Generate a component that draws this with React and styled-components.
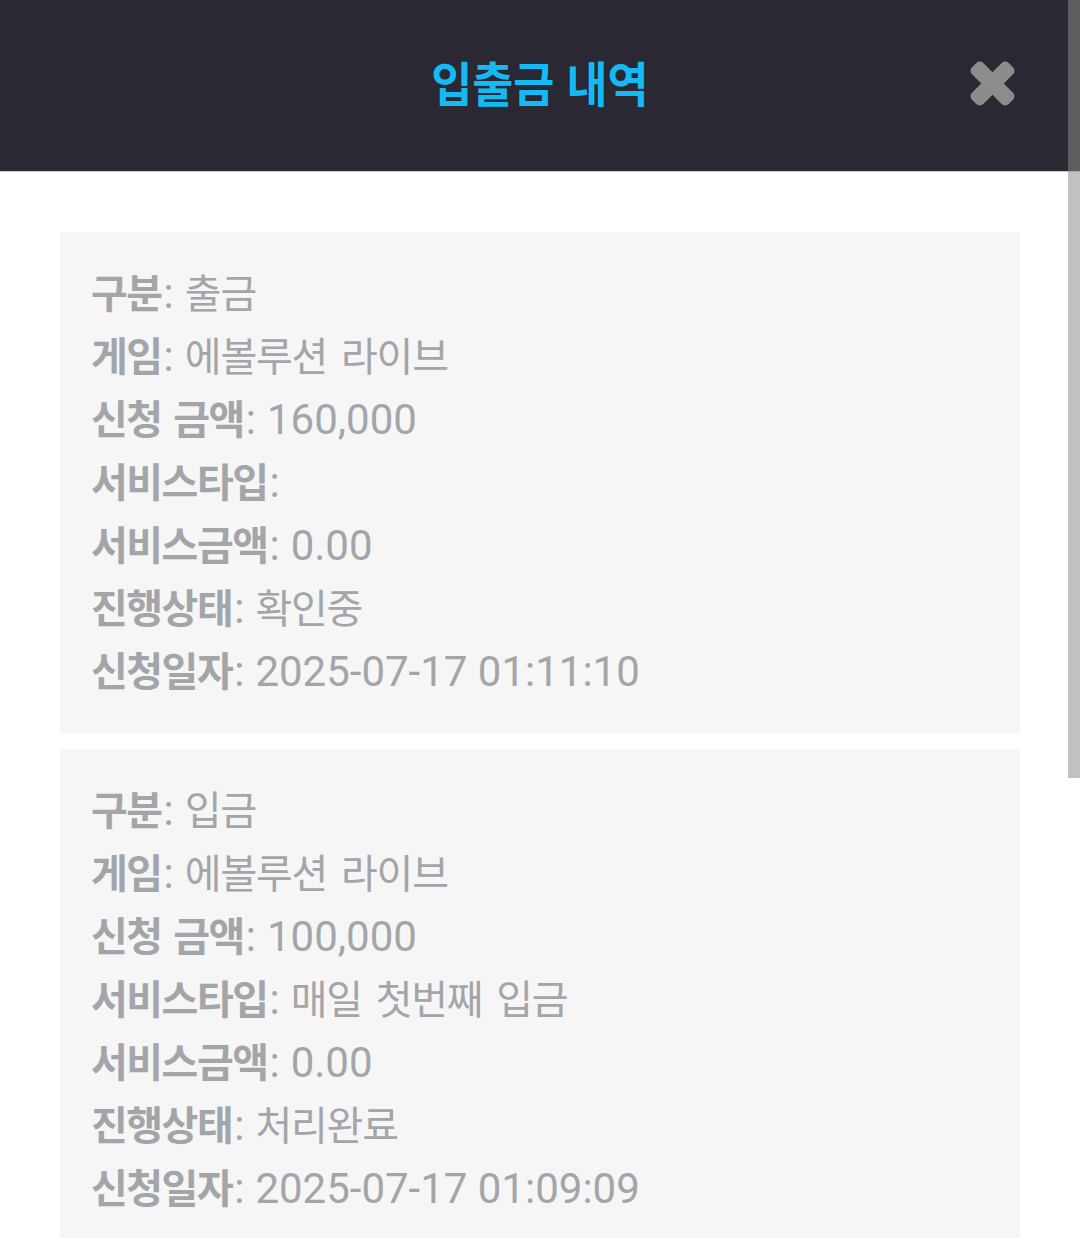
import React from "react";
import styled, { createGlobalStyle } from "styled-components";

const Global = createGlobalStyle`
  html, body { margin: 0; padding: 0; overflow: hidden; background: #ffffff; }
  body { font-family: Roboto, "Noto Sans CJK KR", sans-serif; }
`;

const Page = styled.div`
  width: 1080px;
  height: 1238px;
  overflow: hidden;
  position: relative;
  background: #ffffff;
`;

const Header = styled.header`
  height: 172px;
  background: #2a2933;
  display: flex;
  align-items: center;
  justify-content: center;
  position: relative;
  box-sizing: border-box;
  border-bottom: 1px solid #c9c9cc;
`;

const Title = styled.h1`
  margin: 0 0 10px 0;
  font-family: "Noto Sans CJK KR", sans-serif;
  font-weight: 700;
  font-size: 48px;
  line-height: 1;
  color: #14baf4;
  letter-spacing: 0;
  word-spacing: 2px;
  transform: scaleX(0.93);
`;

const CloseButton = styled.button`
  position: absolute;
  right: 63px;
  top: 59px;
  width: 49px;
  height: 49px;
  padding: 0;
  border: 0;
  background: transparent;
  display: flex;
  align-items: center;
  justify-content: center;
`;

const List = styled.main`
  padding: 60px 60px 0 60px;
  display: flex;
  flex-direction: column;
  gap: 16px;
`;

const Card = styled.section`
  background: #f6f6f6;
  padding: 28px 31px 32px 31px;
  display: flex;
  flex-direction: column;
`;

const Row = styled.div`
  height: 63px;
  line-height: 63px;
  white-space: nowrap;
  color: #a3a5a9;
`;

const Label = styled.span`
  font-family: "Noto Sans CJK KR", sans-serif;
  font-weight: 700;
  font-size: 40px;
  letter-spacing: -1.5px;
  word-spacing: 4px;
  margin-right: 2px;
`;

const Colon = styled.span`
  font-family: Roboto, sans-serif;
  font-size: 42px;
  margin-right: 11px;
`;

const Value = styled.span`
  font-family: ${(p) => (p.$hangul ? '"Noto Sans CJK KR", sans-serif' : "Roboto, sans-serif")};
  font-weight: 400;
  font-size: ${(p) => (p.$hangul ? "40px" : "42px")};
  letter-spacing: ${(p) => (p.$hangul ? "-1.2px" : "0")};
  word-spacing: ${(p) => (p.$hangul ? "6px" : "0")};
`;

const ScrollThumb = styled.div`
  position: fixed;
  right: 0;
  top: 0;
  width: 12px;
  height: 778px;
  background: rgba(137, 137, 137, 0.53);
`;

const records = [
  [
    ["구분", "출금"],
    ["게임", "에볼루션 라이브"],
    ["신청 금액", "160,000"],
    ["서비스타입", ""],
    ["서비스금액", "0.00"],
    ["진행상태", "확인중"],
    ["신청일자", "2025-07-17 01:11:10"],
  ],
  [
    ["구분", "입금"],
    ["게임", "에볼루션 라이브"],
    ["신청 금액", "100,000"],
    ["서비스타입", "매일 첫번째 입금"],
    ["서비스금액", "0.00"],
    ["진행상태", "처리완료"],
    ["신청일자", "2025-07-17 01:09:09"],
  ],
];

const hangul = /[\uAC00-\uD7A3]/;

function CloseIcon() {
  return (
    <svg width="49" height="49" viewBox="0 0 49 49">
      <g fill="#8c8c8c" transform="translate(24.5 24.5) rotate(45)">
        <rect x="-26" y="-8" width="52" height="16" rx="5" />
        <rect x="-8" y="-26" width="16" height="52" rx="5" />
      </g>
    </svg>
  );
}

export default function App() {
  return (
    <Page>
      <Global />
      <Header>
        <Title>입출금 내역</Title>
        <CloseButton aria-label="닫기">
          <CloseIcon />
        </CloseButton>
      </Header>
      <List>
        {records.map((rec, i) => (
          <Card key={i}>
            {rec.map(([label, value]) => (
              <Row key={label}>
                <Label>{label}</Label>
                <Colon>:</Colon>
                <Value $hangul={hangul.test(value)}>{value}</Value>
              </Row>
            ))}
          </Card>
        ))}
      </List>
      <ScrollThumb />
    </Page>
  );
}
